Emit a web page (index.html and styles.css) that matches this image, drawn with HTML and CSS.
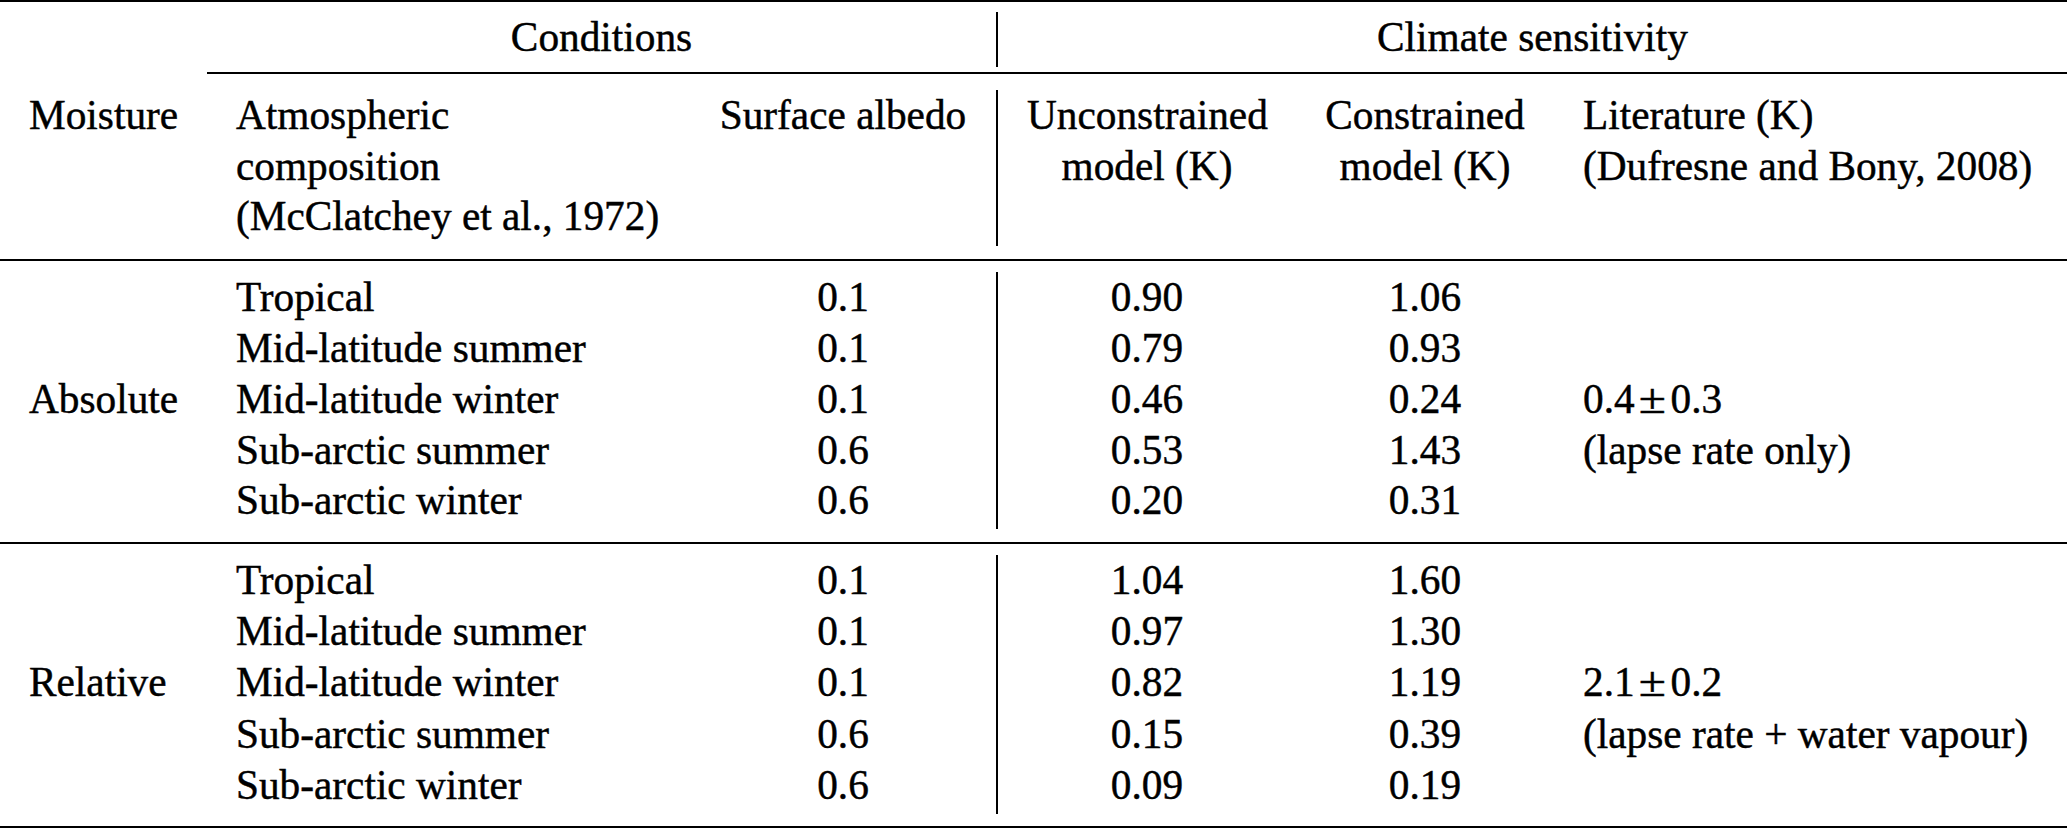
FILE: index.html
```html
<!DOCTYPE html>
<html lang="en">
<head>
<meta charset="utf-8">
<title>Climate sensitivity</title>
<link rel="stylesheet" href="styles.css">
</head>
<body>
<div class="table">
  <div class="sec sec-top">
    <div class="grid">
      <div class="c"></div>
      <div class="c span23 ctr">Conditions</div>
      <div class="c span46 ctr vr">Climate sensitivity</div>
    </div>
  </div>
  <div class="cmid"></div>
  <div class="sec sec-head">
    <div class="grid">
      <div class="c">Moisture</div>
      <div class="c">Atmospheric<br>composition<br>(McClatchey et al., 1972)</div>
      <div class="c ctr">Surface albedo</div>
      <div class="c ctr vr">Unconstrained<br>model (K)</div>
      <div class="c ctr">Constrained<br>model (K)</div>
      <div class="c">Literature (K)<br>(Dufresne and Bony, 2008)</div>
    </div>
  </div>
  <div class="sec sec-body">
    <div class="grid">
      <div class="row"><div class="c"></div><div class="c">Tropical</div><div class="c ctr">0.1</div><div class="c ctr vr">0.90</div><div class="c ctr">1.06</div><div class="c"></div></div>
      <div class="row"><div class="c"></div><div class="c">Mid-latitude summer</div><div class="c ctr">0.1</div><div class="c ctr vr">0.79</div><div class="c ctr">0.93</div><div class="c"></div></div>
      <div class="row"><div class="c">Absolute</div><div class="c">Mid-latitude winter</div><div class="c ctr">0.1</div><div class="c ctr vr">0.46</div><div class="c ctr">0.24</div><div class="c">0.4<span class="pm">±</span>0.3</div></div>
      <div class="row"><div class="c"></div><div class="c">Sub-arctic summer</div><div class="c ctr">0.6</div><div class="c ctr vr">0.53</div><div class="c ctr">1.43</div><div class="c">(lapse rate only)</div></div>
      <div class="row"><div class="c"></div><div class="c">Sub-arctic winter</div><div class="c ctr">0.6</div><div class="c ctr vr">0.20</div><div class="c ctr">0.31</div><div class="c"></div></div>
    </div>
  </div>
  <div class="sec sec-body last">
    <div class="grid">
      <div class="row"><div class="c"></div><div class="c">Tropical</div><div class="c ctr">0.1</div><div class="c ctr vr">1.04</div><div class="c ctr">1.60</div><div class="c"></div></div>
      <div class="row"><div class="c"></div><div class="c">Mid-latitude summer</div><div class="c ctr">0.1</div><div class="c ctr vr">0.97</div><div class="c ctr">1.30</div><div class="c"></div></div>
      <div class="row"><div class="c">Relative</div><div class="c">Mid-latitude winter</div><div class="c ctr">0.1</div><div class="c ctr vr">0.82</div><div class="c ctr">1.19</div><div class="c">2.1<span class="pm">±</span>0.2</div></div>
      <div class="row"><div class="c"></div><div class="c">Sub-arctic summer</div><div class="c ctr">0.6</div><div class="c ctr vr">0.15</div><div class="c ctr">0.39</div><div class="c">(lapse rate + water vapour)</div></div>
      <div class="row"><div class="c"></div><div class="c">Sub-arctic winter</div><div class="c ctr">0.6</div><div class="c ctr vr">0.09</div><div class="c ctr">0.19</div><div class="c"></div></div>
    </div>
  </div>
</div>
</body>
</html>
```

FILE: styles.css
```css
html, body {
  margin: 0;
  padding: 0;
  background: #ffffff;
}

body {
  font-family: "Liberation Serif", "Tinos", "Times New Roman", "Nimbus Roman", "FreeSerif", serif;
  font-size: 41.3px;
  color: #000000;
  -webkit-text-stroke: 0.45px #000000;
}

.table {
  width: 2067px;
}

.grid {
  display: grid;
  grid-template-columns: 207px 483px 306px 300px 258px 513px;
}

.row {
  display: contents;
}

.c {
  padding: 0 29px;
  line-height: 50.5px;
  white-space: nowrap;
  text-align: left;
}

.ctr {
  text-align: center;
}

.vr {
  border-left: 2px solid #000000;
}

.pm {
  display: inline-block;
  margin: 0 0.16em;
  transform: scaleX(1.2);
}

.span23 {
  grid-column: 2 / 4;
}

.span46 {
  grid-column: 4 / 7;
}

.sec-top {
  border-top: 2px solid #000000;
  padding: 10.3px 0 5.7px;
}

.sec-top .c {
  padding-bottom: 4px;
}

.cmid {
  margin-left: 207px;
  border-top: 2px solid #000000;
}

.sec-head {
  padding: 15.75px 0 13.75px;
  border-bottom: 2px solid #000000;
}

.sec-head .c {
  padding-bottom: 4px;
}

.sec-body {
  padding: 10.8px 0 13.2px;
  border-bottom: 2px solid #000000;
}

.sec-body .grid {
  grid-template-rows: repeat(4, 50.8px) 53.8px;
}

.sec-body .c {
  line-height: 50.8px;
}

.sec-body.last {
  padding-bottom: 12.5px;
}

.sec-body.last .grid {
  grid-template-rows: repeat(4, 51.1px) 54.1px;
}

.sec-body.last .c {
  line-height: 51.1px;
}
```
